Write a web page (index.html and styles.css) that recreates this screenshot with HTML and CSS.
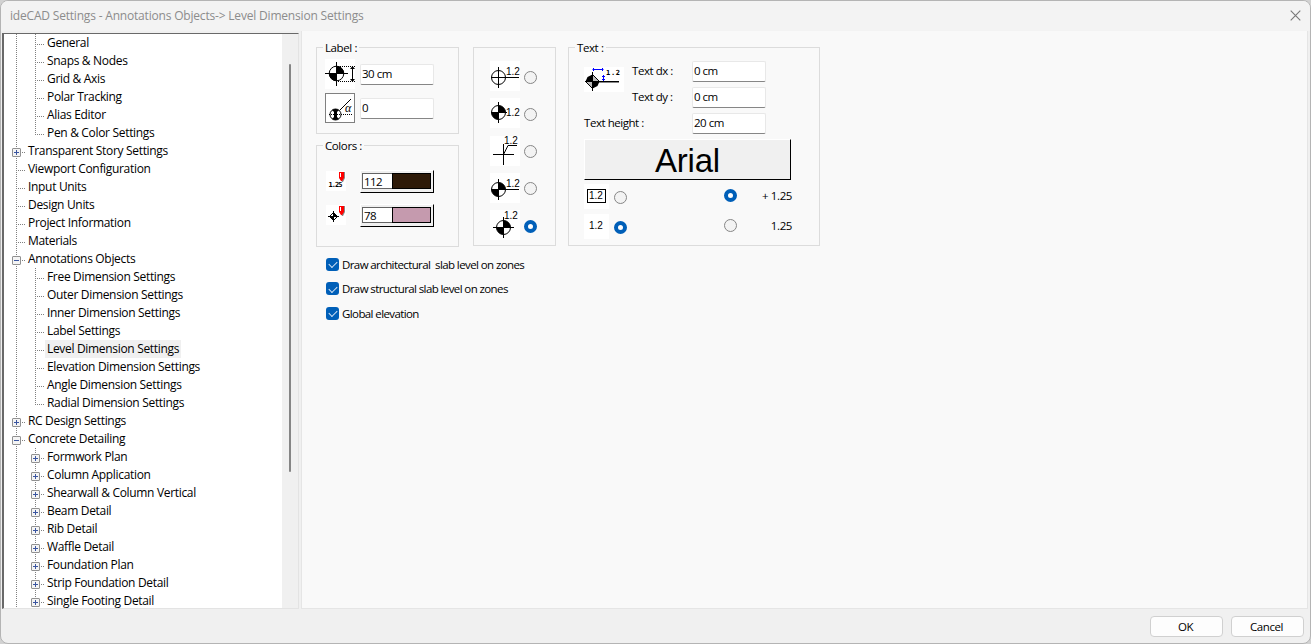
FILE: index.html
```html
<!DOCTYPE html>
<html lang="en">

<head>
    <meta charset="UTF-8">
    <meta name="viewport" content="width=device-width, initial-scale=1.0">
    <title>ideCAD Settings</title>
    <link rel="stylesheet" href="styles.css">
</head>

<body>
    <div class="window">
        <header class="titlebar">
            <h1>ideCAD Settings - Annotations Objects-&gt; Level Dimension Settings</h1>
            <svg class="close" width="11" height="11" viewBox="0 0 11 11">
                <path d="M.7.7l9.6 9.6M10.3.7L.7 10.3" stroke="#777" stroke-width="1.1" />
            </svg>
        </header>

        <div class="body">
            <nav class="tree">
                <ul>
                    <li class="sub">General</li>
                    <li class="sub">Snaps &amp; Nodes</li>
                    <li class="sub">Grid &amp; Axis</li>
                    <li class="sub">Polar Tracking</li>
                    <li class="sub">Alias Editor</li>
                    <li class="sub last">Pen &amp; Color Settings</li>
                    <li><i class="box plus"></i>Transparent Story Settings</li>
                    <li>Viewport Configuration</li>
                    <li>Input Units</li>
                    <li>Design Units</li>
                    <li>Project Information</li>
                    <li>Materials</li>
                    <li><i class="box"></i>Annotations Objects</li>
                    <li class="sub">Free Dimension Settings</li>
                    <li class="sub">Outer Dimension Settings</li>
                    <li class="sub">Inner Dimension Settings</li>
                    <li class="sub">Label Settings</li>
                    <li class="sub"><span class="selected">Level Dimension Settings</span></li>
                    <li class="sub">Elevation Dimension Settings</li>
                    <li class="sub">Angle Dimension Settings</li>
                    <li class="sub last">Radial Dimension Settings</li>
                    <li><i class="box plus"></i>RC Design Settings</li>
                    <li><i class="box"></i>Concrete Detailing</li>
                    <li class="sub"><i class="box plus"></i>Formwork Plan</li>
                    <li class="sub"><i class="box plus"></i>Column Application</li>
                    <li class="sub"><i class="box plus"></i>Shearwall &amp; Column Vertical</li>
                    <li class="sub"><i class="box plus"></i>Beam Detail</li>
                    <li class="sub"><i class="box plus"></i>Rib Detail</li>
                    <li class="sub"><i class="box plus"></i>Waffle Detail</li>
                    <li class="sub"><i class="box plus"></i>Foundation Plan</li>
                    <li class="sub"><i class="box plus"></i>Strip Foundation Detail</li>
                    <li class="sub"><i class="box plus"></i>Single Footing Detail</li>
                </ul>
                <div class="scrollbar">
                    <div class="thumb"></div>
                </div>
            </nav>

            <main class="panel">
                <div class="groups">
                    <div class="stack">
                        <fieldset class="group label-group">
                            <legend>Label :</legend>
                            <div class="field">
                                <svg class="icon" width="30" height="30" viewBox="0 0 30 30">
                                    <circle cx="11.5" cy="14.5" r="7.3" fill="none" stroke="#000" />
                                    <path d="M11.5 14.5V7a7.5 7.5 0 0 1 7.5 7.5zM11.5 14.5V22A7.5 7.5 0 0 1 4 14.5z" />
                                    <path d="M0 14.5h23M11.5 3v24M27.5 8v14" stroke="#000" />
                                    <path d="M13 7.5h17M13 22.5h17" stroke="#000" stroke-dasharray="1 1" />
                                    <path d="M27.5 7l2.5 3h-5zM27.5 23l2.5-3h-5z" />
                                </svg>
                                <input class="edit" type="text" value="30 cm">
                            </div>
                            <div class="field">
                                <svg class="icon framed" width="30" height="30" viewBox="0 0 30 30">
                                    <rect x=".5" y=".5" width="29" height="29" fill="none" stroke="#808080" />
                                    <circle cx="10.5" cy="21.5" r="5.5" fill="none" stroke="#000" />
                                    <path d="M7 17q3.500-2 7 0l-2 2v5l2 2q-3.500 2-7 0l2-2v-5z" />
                                    <path d="M14.500 17.500L26 6" stroke="#000" />
                                    <path d="M4 21.500h24" stroke="#000" stroke-dasharray="1 1" />
                                    <text class="alpha" x="20" y="18.500">α</text>
                                </svg>
                                <input class="edit" type="text" value="0">
                            </div>
                        </fieldset>

                        <fieldset class="group color-group">
                            <legend>Colors :</legend>
                            <div class="field">
                                <svg class="icon" width="20" height="20" viewBox="0 0 20 20">
                                    <path d="M14 1h5v6l-2 4h-1l-2-4z" fill="#888" />
                                    <path d="M13 1h5v6l-2 3h-1l-2-3z" fill="#f00" />
                                    <path d="M14.500 2v4" stroke="#fff" />
                                    <text class="tiny" x="2.500" y="16" textLength="14">1.25</text>
                                </svg>
                                <div class="color">
                                    <span>112</span>
                                    <span class="swatch brown"></span>
                                </div>
                            </div>
                            <div class="field">
                                <svg class="icon" width="20" height="20" viewBox="0 0 20 20">
                                    <path d="M14 1h5v6l-2 4h-1l-2-4z" fill="#888" />
                                    <path d="M13 1h5v6l-2 3h-1l-2-3z" fill="#f00" />
                                    <path d="M14.500 2v4" stroke="#fff" />
                                    <path d="M7.500 7.500l4 4-4 4-4-4z" fill="none" stroke="#000" />
                                    <path d="M7.500 11.500v-4l4 4zM7.500 11.500v4l-4-4z" />
                                    <path d="M2 11.500h11M7.500 6v11" stroke="#000" />
                                </svg>
                                <div class="color">
                                    <span>78</span>
                                    <span class="swatch pink"></span>
                                </div>
                            </div>
                        </fieldset>
                    </div>

                    <div class="group style-group">
                        <label>
                            <svg class="icon" width="30" height="30" viewBox="0 0 30 30">
                                <circle cx="8.500" cy="16.500" r="7" fill="none" stroke="#000" />
                                <path d="M1 16.500h28M8.500 6v21" stroke="#000" />
                                <text class="num" x="16" y="14">1.2</text>
                            </svg>
                            <input type="radio" name="style">
                        </label>
                        <label>
                            <svg class="icon" width="30" height="30" viewBox="0 0 30 30">
                                <circle cx="8.500" cy="14.500" r="7" fill="none" stroke="#000" />
                                <path d="M8.500 14.500v-7a7 7 0 0 1 7 7zM8.500 14.500v7a7 7 0 0 1-7-7z" />
                                <path d="M1 14.500h16M8.500 4v21" stroke="#000" />
                                <text class="num" x="16" y="18">1.2</text>
                            </svg>
                            <input type="radio" name="style">
                        </label>
                        <label>
                            <svg class="icon" width="30" height="30" viewBox="0 0 30 30">
                                <path d="M3 18.500h21M13.500 8v21M13.500 18.500l4.500-9h9" fill="none" stroke="#000" />
                                <text class="num" x="14" y="8">1.2</text>
                            </svg>
                            <input type="radio" name="style">
                        </label>
                        <label>
                            <svg class="icon" width="30" height="30" viewBox="0 0 30 30">
                                <circle cx="8.500" cy="16.500" r="7" fill="none" stroke="#000" />
                                <path d="M8.500 16.500v-7a7 7 0 0 1 7 7zM8.500 16.500v7a7 7 0 0 1-7-7z" />
                                <path d="M1 16.500h28M8.500 6v21" stroke="#000" />
                                <text class="num" x="16" y="14">1.2</text>
                            </svg>
                            <input type="radio" name="style">
                        </label>
                        <label>
                            <svg class="icon" width="30" height="30" viewBox="0 0 30 30">
                                <circle cx="13.500" cy="17.500" r="7" fill="none" stroke="#000" />
                                <path d="M13.500 17.500v-7a7 7 0 0 1 7 7zM13.500 17.500v7a7 7 0 0 1-7-7z" />
                                <path d="M3 17.500h21M13.500 7v21" stroke="#000" />
                                <text class="num" x="14" y="9">1.2</text>
                            </svg>
                            <input type="radio" name="style" checked>
                        </label>
                    </div>

                    <fieldset class="group text-group">
                        <legend>Text :</legend>
                        <div class="text-fields">
                            <svg class="icon offset-icon" width="40" height="25" viewBox="0 0 40 25">
                                <path d="M8.500 7.500l7 7-7 7-7-7z" fill="#bbb" stroke="#000" />
                                <path d="M8.500 14.500h-7l2-4.500 5-2.500zM8.500 14.500h7l-2 4.500-5 2.500z" />
                                <path d="M8.500 5v19" stroke="#000" />
                                <path d="M15 15.500h20" stroke="#888" />
                                <path d="M1 14.500h34" stroke="#000" />
                                <path d="M8.500 2.500h11M9.500 1v3M18.500 1v3M19.500 8v6M18 9.500h3M18 12.500h3" stroke="#00f" />
                                <text class="tiny" x="22" y="8" textLength="14">1.2</text>
                            </svg>
                            <span>Text dx :</span>
                            <input class="edit" type="text" value="0 cm">
                            <span>Text dy :</span>
                            <input class="edit" type="text" value="0 cm">
                            <span class="wide">Text height :</span>
                            <input class="edit" type="text" value="20 cm">
                        </div>
                        <button class="font-button">Arial</button>
                        <div class="options">
                            <label>
                                <svg class="icon" width="25" height="25" viewBox="0 0 25 25">
                                    <rect x="3.500" y="5.500" width="18" height="13" fill="none" stroke="#000" />
                                    <text class="num" x="5" y="15">1.2</text>
                                </svg>
                                <input type="radio" name="frame">
                            </label>
                            <label class="sign"><input type="radio" name="sign" checked><span>+ 1.25</span></label>
                            <label>
                                <svg class="icon" width="25" height="25" viewBox="0 0 25 25">
                                    <text class="num" x="5" y="15">1.2</text>
                                </svg>
                                <input type="radio" name="frame" checked>
                            </label>
                            <label class="sign"><input type="radio" name="sign"><span>1.25</span></label>
                        </div>
                    </fieldset>
                </div>

                <div class="checks">
                    <label><input type="checkbox" checked>Draw architectural&nbsp; slab level on zones</label>
                    <label><input type="checkbox" checked>Draw structural slab level on zones</label>
                    <label><input type="checkbox" checked>Global elevation</label>
                </div>
            </main>
        </div>

        <footer class="buttons">
            <button>OK</button>
            <button>Cancel</button>
        </footer>
    </div>
</body>

</html>
```
FILE: styles.css
```css
* {
    box-sizing: border-box;
}

body {
    margin: 0;
    background: #d2d2d2;
    font-family: "Open Sans", "Noto Sans", sans-serif;
    font-size: 12px;
    color: #000;
}

.window {
    display: flex;
    flex-direction: column;
    height: 644px;
    border: 1px solid #b4b4b4;
    border-radius: 8px;
    background: #f0f0f0;
    overflow: hidden;
}

.titlebar {
    display: flex;
    justify-content: space-between;
    align-items: center;
    height: 30px;
    flex: none;
    padding: 0 9px 2px;
    background: #f3f3f3;
}

.titlebar h1 {
    margin: 0;
    font-size: 12px;
    font-weight: normal;
    letter-spacing: -0.19px;
    color: #8c8c8c;
}

.body {
    display: flex;
    height: 578px;
    flex: none;
}

/* tree */
.tree {
    display: flex;
    width: 297px;
    height: 576px;
    margin: 2px 2px 0 1px;
    border: 1px solid #e3e3e3;
    border-top-color: #696969;
    border-left: 2px solid #696969;
    background: #fff;
    overflow: hidden;
}

.tree ul {
    flex: 1;
    margin: 0;
    padding: 0;
    list-style: none;
    letter-spacing: -0.32px;
}

.tree li {
    display: flex;
    align-items: center;
    position: relative;
    height: 18px;
    padding: 0 0 2px 24px;
    white-space: pre;
    background:
        repeating-linear-gradient(to bottom, #808080 0 1px, transparent 1px 2px) 12px 0 / 1px 18px no-repeat,
        repeating-linear-gradient(to right, #808080 0 1px, transparent 1px 2px) 12px 10px / 9px 1px no-repeat;
}

.tree .sub {
    padding-left: 43px;
    background:
        repeating-linear-gradient(to bottom, #808080 0 1px, transparent 1px 2px) 12px 0 / 1px 18px no-repeat,
        repeating-linear-gradient(to bottom, #808080 0 1px, transparent 1px 2px) 31px 0 / 1px 18px no-repeat,
        repeating-linear-gradient(to right, #808080 0 1px, transparent 1px 2px) 31px 10px / 9px 1px no-repeat;
}

.tree .last {
    background-size: 1px 18px, 1px 11px, 9px 1px;
}

.selected {
    margin: 0 0 -2px -2px;
    padding: 0 2px;
    line-height: 18px;
    background: #f0f0f0;
}

/* expander sits on top of the guide lines */
.box {
    position: absolute;
    left: 8px;
    top: 6px;
    width: 9px;
    height: 9px;
    border: 1px solid #919191;
    border-radius: 1px;
    background:
        linear-gradient(#3a55a0, #3a55a0) 1px 3px / 5px 1px no-repeat,
        #f4f4f4;
}

.box.plus {
    background:
        linear-gradient(#3a55a0, #3a55a0) 1px 3px / 5px 1px no-repeat,
        linear-gradient(#3a55a0, #3a55a0) 3px 1px / 1px 5px no-repeat,
        #f4f4f4;
}

.sub .box {
    left: 27px;
}

.scrollbar {
    width: 16px;
    padding: 30px 0 0 7px;
    background: #f0f0f0;
}

.thumb {
    width: 2px;
    height: 408px;
    border-radius: 1px;
    background: #858585;
}

/* settings panel */
.panel {
    width: 1007px;
    padding: 9px 0 0 14px;
    border: 1px solid #e5e5e5;
    border-top: 0;
    background: #f9f9f9;
    font-size: 11.5px;
    letter-spacing: -0.6px;
}

.groups {
    display: flex;
}

.group {
    min-width: 0;
    margin: 0;
    padding: 0;
    border: 1px solid #dcdcdc;
}

.group legend {
    height: 15px;
    margin-left: 6px;
    padding: 0 2px;
    line-height: 15px;
    letter-spacing: -0.4px;
}

.icon {
    display: block;
    flex: none;
    background: #fff;
}

.num {
    font: 10px "Liberation Sans", sans-serif;
    letter-spacing: 0;
}

.tiny {
    font: bold 7px "DejaVu Sans Mono", monospace;
    letter-spacing: 0;
}

.alpha {
    font: italic 12px "Liberation Serif", serif;
}

.field {
    display: flex;
    align-items: center;
}

.edit {
    width: 74px;
    height: 21px;
    padding: 0 1px 2px;
    border: 1px solid #e8e8e8;
    border-bottom-color: #868686;
    border-radius: 2px;
    background: #fff;
    font: inherit;
    letter-spacing: -0.5px;
}

.label-group {
    width: 143px;
    height: 94px;
}

.label-group .field {
    gap: 5px;
    margin: 4px 0 0 8px;
}

.label-group .edit {
    margin-top: 1px;
}

.color-group {
    width: 143px;
    height: 109px;
    margin-top: 4px;
    padding-top: 17px;
}

.color-group .field {
    gap: 14px;
    margin: 0 0 11px 9px;
}

.color-group .icon {
    margin-bottom: 1px;
}

.color {
    display: flex;
    width: 74px;
    height: 23px;
    padding: 2px 2px 3px 1px;
    border: 1px solid #fff;
    border-right-color: #000;
    border-bottom-color: #000;
    background: #f0f0f0;
}

.color span {
    width: 30px;
    padding-left: 1px;
    border: 1px solid #646464;
    border-right: 0;
    line-height: 15px;
    background: #fff;
}

.color .swatch {
    flex: 1;
    border: 1px solid #000;
}

.color .brown {
    background: #2e1a08;
}

.color .pink {
    background: #c59aae;
}

.style-group {
    display: flex;
    flex-direction: column;
    gap: 7.3px;
    width: 83px;
    height: 199px;
    margin: 7px 12px 0 14px;
    padding: 13px 0 0 16px;
}

.style-group label {
    display: flex;
    align-items: center;
    gap: 4px;
}

input[type="radio"] {
    appearance: none;
    flex: none;
    width: 13px;
    height: 13px;
    margin: 2px 0 0;
    border: 1px solid #868686;
    border-radius: 50%;
    background: #f3f3f3;
}

input[type="radio"]:checked {
    border: 4px solid #005fb8;
    background: #fff;
}

.text-group {
    width: 252px;
    height: 206px;
}

.text-fields {
    display: grid;
    grid-template-columns: 48px 60px 74px;
    grid-auto-rows: 21px;
    row-gap: 5px;
    align-items: center;
    margin: 6px 0 0 15px;
}

.text-fields span {
    padding-bottom: 2px;
    letter-spacing: -0.45px;
}

.offset-icon {
    grid-row: span 2;
    margin-bottom: 10px;
}

.text-fields .wide {
    grid-column: span 2;
}

.font-button {
    display: block;
    width: 207px;
    height: 41px;
    margin: 5px 0 0 15px;
    padding: 0;
    border: 1px solid #fff;
    border-right-color: #000;
    border-bottom-color: #000;
    background: #f0f0f0;
    font: 33px/41px "Liberation Sans", Arial, sans-serif;
    letter-spacing: -0.2px;
}

.options {
    display: grid;
    grid-template-columns: 140px 68px;
    grid-auto-rows: 25px;
    row-gap: 5px;
    margin: 4px 0 0 15px;
}

.options label {
    display: flex;
    align-items: center;
    gap: 5px;
}

.options .sign {
    justify-content: space-between;
    padding-bottom: 2px;
    letter-spacing: -0.4px;
}

.options .sign input {
    margin-top: 0;
}

/* checkboxes */
.checks {
    display: flex;
    flex-direction: column;
    gap: 8.5px;
    margin: 9px 0 0 10px;
}

.checks label {
    display: flex;
    align-items: center;
    gap: 3px;
    height: 16px;
}

.checks input {
    appearance: none;
    width: 13px;
    height: 13px;
    margin: 0;
    border-radius: 3px;
    background: #005fb8;
}

.checks input::before {
    content: "";
    display: block;
    width: 7px;
    height: 4px;
    margin: 3.5px 0 0 3px;
    border: solid #d5e5f5;
    border-width: 0 0 1px 1px;
    transform: rotate(-45deg);
}

.buttons {
    display: flex;
    justify-content: flex-end;
    gap: 8px;
    padding: 7px 6px 0 0;
}

.buttons button {
    width: 73px;
    height: 21px;
    padding: 0 2px 0 0;
    border: 1px solid #d0d0d0;
    border-radius: 4px;
    background: #fdfdfd;
    font: 11.5px "Open Sans", sans-serif;
    letter-spacing: -0.4px;
}
```
